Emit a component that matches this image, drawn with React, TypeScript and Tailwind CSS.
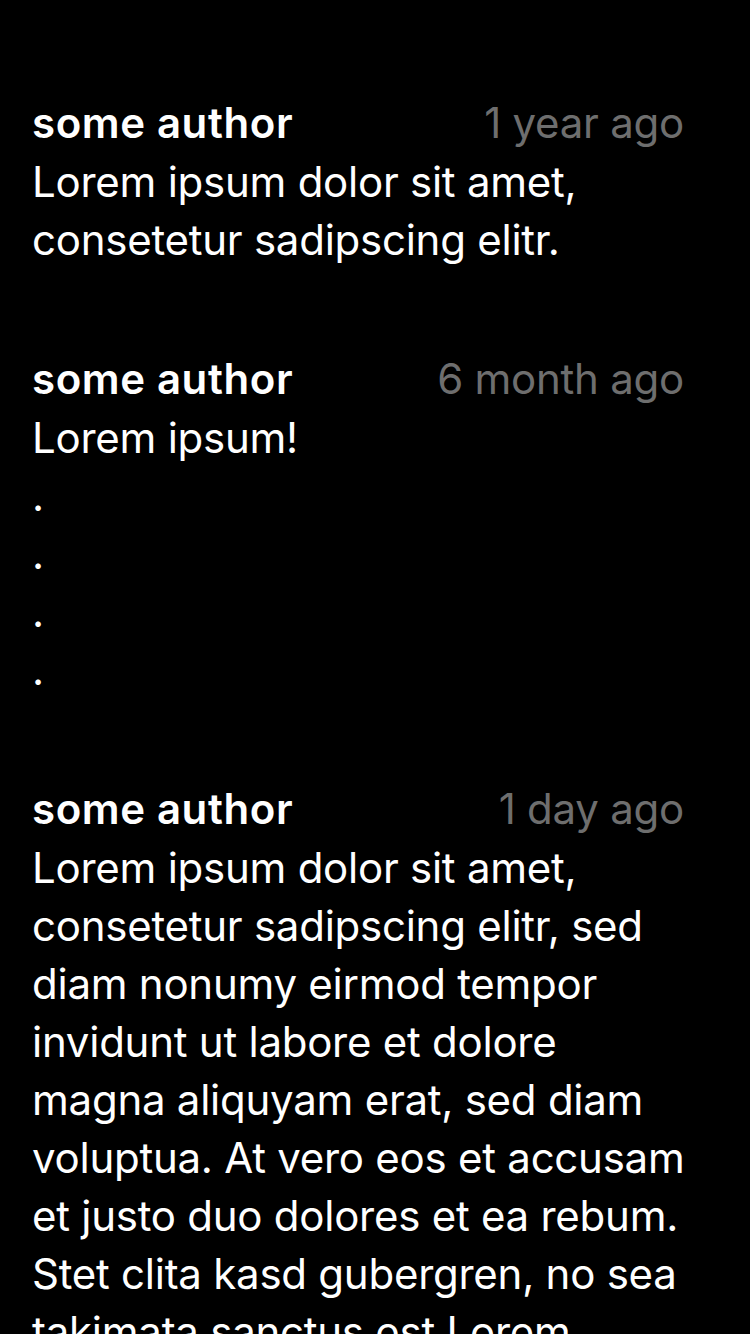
import React from "react";

const font = { fontFamily: 'Inter, "Noto Sans", "Liberation Sans", sans-serif' };

function Comment({ date, lines }: { date: string; lines: string[] }) {
  return (
    <div className="flex flex-col">
      <div className="flex items-baseline justify-between leading-[60px]">
        <span className="font-semibold text-white tracking-[0.6px]">some author</span>
        <span className="text-[#6e6e6e]">{date}</span>
      </div>
      <div className="leading-[58px] text-white">
        {lines.map((l, i) => (
          <div key={i} className="whitespace-nowrap">
            {l}
          </div>
        ))}
      </div>
    </div>
  );
}

export default function App() {
  return (
    <div
      className="w-[750px] h-[1334px] overflow-hidden bg-black pl-[32px] pr-[66px] pt-[93px] text-[42px] tracking-[-0.25px]"
      style={font}
    >
      <div className="flex flex-col gap-[80px]">
        <Comment date="1 year ago" lines={["Lorem ipsum dolor sit amet,", "consetetur sadipscing elitr."]} />
        <Comment date="6 month ago" lines={["Lorem ipsum!", ".", ".", ".", "."]} />
        <Comment
          date="1 day ago"
          lines={[
            "Lorem ipsum dolor sit amet,",
            "consetetur sadipscing elitr, sed",
            "diam nonumy eirmod tempor",
            "invidunt ut labore et dolore",
            "magna aliquyam erat, sed diam",
            "voluptua. At vero eos et accusam",
            "et justo duo dolores et ea rebum.",
            "Stet clita kasd gubergren, no sea",
            "takimata sanctus est Lorem",
            "ipsum dolor sit amet.",
          ]}
        />
      </div>
    </div>
  );
}
